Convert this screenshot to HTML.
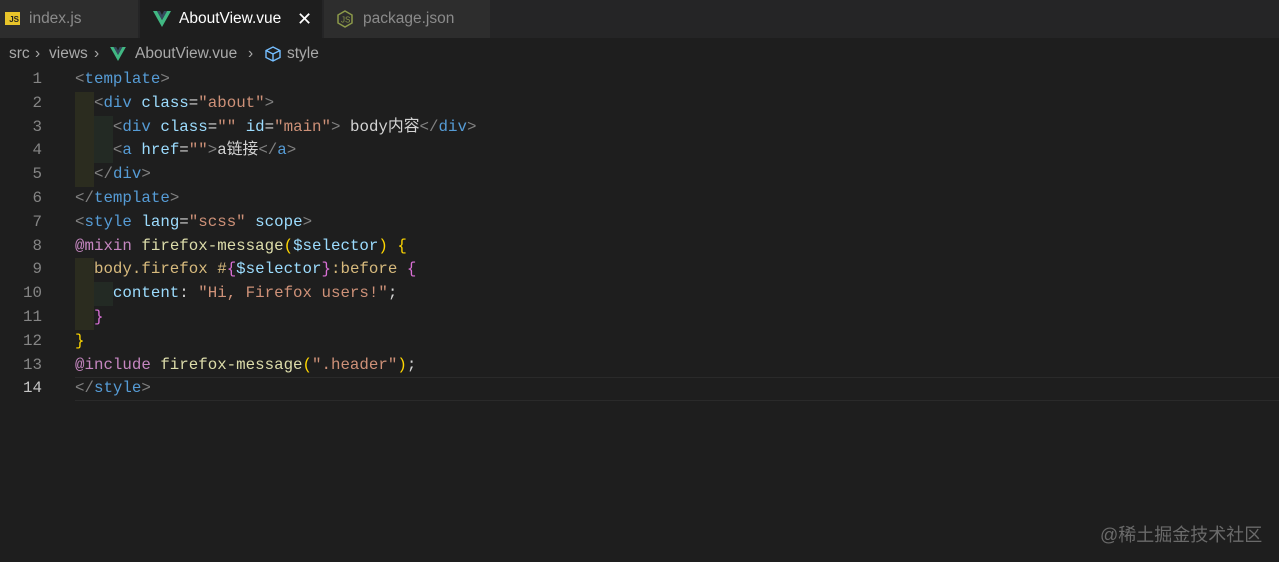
<!DOCTYPE html>
<html><head><meta charset="utf-8"><style>
*{margin:0;padding:0;box-sizing:border-box}
body{width:1279px;height:562px;background:#1e1e1e;overflow:hidden;position:relative;font-family:"Liberation Sans","Noto Sans CJK SC",sans-serif}
.tabs{position:absolute;left:0;top:0;width:1279px;height:38px;background:#252526}
.tab{position:absolute;top:0;height:38px;background:#2d2d2d;color:#8b8b8b;font-size:15.5px;line-height:38px}
.tab.active{background:#1e1e1e;color:#fff}
.bc{position:absolute;left:0;top:41px;height:26px;line-height:26px;color:#a9a9a9;font-size:15.5px;white-space:nowrap}
.code{position:absolute;left:0;top:68px;font-family:"Liberation Mono","Noto Sans CJK SC",monospace;font-size:15.8px}
.ln{position:absolute;left:0;width:42px;text-align:right;color:#858585;height:23.8px;line-height:23.8px}
.l{position:absolute;left:75px;height:23.8px;line-height:23.8px;white-space:pre;color:#d4d4d4}
.g{position:absolute;width:19px;height:23.8px}
.b{color:#808080}.t{color:#569cd6}.a{color:#9cdcfe}.s{color:#ce9178}.k{color:#c586c0}.f{color:#dcdcaa}.y{color:#ffd700}.p{color:#da70d6}.c{color:#d7ba7d}
</style></head><body>
<div class="tabs">
 <div class="tab" style="left:0;width:138px"><span style="position:absolute;left:5px;top:12px;width:15px;height:13px;background:#e8c42a;color:#222;font-size:8px;line-height:15px;text-align:right;padding-right:1px;font-weight:bold">JS</span><span style="position:absolute;left:29px">index.js</span></div>
 <div class="tab active" style="left:140px;width:182px"><svg style="position:absolute;left:13px;top:11px" width="18" height="16" viewBox="0 0 18 16"><path d="M0 0h4l5 9 5-9h4L9 16z" fill="#41b883"/><path d="M4 0h3l2 4 2-4h3L9 9z" fill="#35495e"/></svg><span style="position:absolute;left:39px">AboutView.vue</span><span style="position:absolute;left:157px;font-size:18px">✕</span></div>
 <div class="tab" style="left:324px;width:166px"><svg style="position:absolute;left:12px;top:10px" width="18" height="18" viewBox="0 0 18 18"><path d="M9 1l7 4v8l-7 4-7-4V5z" fill="none" stroke="#8c9a4a" stroke-width="1.5"/><text x="5" y="12.5" font-size="8" fill="#8c9a4a" font-family="Liberation Sans">JS</text></svg><span style="position:absolute;left:39px">package.json</span></div>
</div>
<div class="bc"><span style="position:absolute;left:9px">src</span><span style="position:absolute;left:35px">›</span><span style="position:absolute;left:49px">views</span><span style="position:absolute;left:94px">›</span><svg style="position:absolute;left:110px;top:6px" width="16" height="14" viewBox="0 0 18 16"><path d="M0 0h4l5 9 5-9h4L9 16z" fill="#41b883"/><path d="M4 0h3l2 4 2-4h3L9 9z" fill="#35495e"/></svg><span style="position:absolute;left:135px">AboutView.vue</span><span style="position:absolute;left:248px">›</span><svg style="position:absolute;left:264px;top:5px" width="18" height="16" viewBox="0 0 18 16"><path d="M9 1l7 3.5v7L9 15l-7-3.5v-7z M2 4.5l7 3.5 7-3.5 M9 8v7" fill="none" stroke="#75beff" stroke-width="1.4"/></svg><span style="position:absolute;left:287px">style</span></div>
<div class="code">
<div class="g" style="left:75px;top:23.8px;height:95.2px;background:#2b2c1f"></div>
<div class="g" style="left:94px;top:47.6px;height:47.6px;background:#232a24"></div>
<div class="g" style="left:75px;top:190.4px;height:71.4px;background:#2b2c1f"></div>
<div class="g" style="left:94px;top:214.2px;height:23.8px;background:#232a24"></div>
<div style="position:absolute;left:75px;top:309.4px;width:1204px;height:23.8px;border-top:1px solid #2a2a2a;border-bottom:1px solid #2a2a2a"></div>
<div class="ln" style="top:0">1</div><div class="ln" style="top:23.8px">2</div><div class="ln" style="top:47.6px">3</div><div class="ln" style="top:71.4px">4</div><div class="ln" style="top:95.2px">5</div><div class="ln" style="top:119px">6</div><div class="ln" style="top:142.8px">7</div><div class="ln" style="top:166.6px">8</div><div class="ln" style="top:190.4px">9</div><div class="ln" style="top:214.2px">10</div><div class="ln" style="top:238px">11</div><div class="ln" style="top:261.8px">12</div><div class="ln" style="top:285.6px">13</div><div class="ln" style="top:309.4px;color:#c6c6c6">14</div>
<div class="l" style="top:0"><span class="b">&lt;</span><span class="t">template</span><span class="b">&gt;</span></div>
<div class="l" style="top:23.8px">  <span class="b">&lt;</span><span class="t">div</span> <span class="a">class</span>=<span class="s">"about"</span><span class="b">&gt;</span></div>
<div class="l" style="top:47.6px">    <span class="b">&lt;</span><span class="t">div</span> <span class="a">class</span>=<span class="s">""</span> <span class="a">id</span>=<span class="s">"main"</span><span class="b">&gt;</span> body内容<span class="b">&lt;/</span><span class="t">div</span><span class="b">&gt;</span></div>
<div class="l" style="top:71.4px">    <span class="b">&lt;</span><span class="t">a</span> <span class="a">href</span>=<span class="s">""</span><span class="b">&gt;</span>a链接<span class="b">&lt;/</span><span class="t">a</span><span class="b">&gt;</span></div>
<div class="l" style="top:95.2px">  <span class="b">&lt;/</span><span class="t">div</span><span class="b">&gt;</span></div>
<div class="l" style="top:119px"><span class="b">&lt;/</span><span class="t">template</span><span class="b">&gt;</span></div>
<div class="l" style="top:142.8px"><span class="b">&lt;</span><span class="t">style</span> <span class="a">lang</span>=<span class="s">"scss"</span> <span class="a">scope</span><span class="b">&gt;</span></div>
<div class="l" style="top:166.6px"><span class="k">@mixin</span> <span class="f">firefox-message</span><span class="y">(</span><span class="a">$selector</span><span class="y">)</span> <span class="y">{</span></div>
<div class="l" style="top:190.4px">  <span class="c">body.firefox #</span><span class="p">{</span><span class="a">$selector</span><span class="p">}</span><span class="c">:before</span> <span class="p">{</span></div>
<div class="l" style="top:214.2px">    <span class="a">content</span>: <span class="s">"Hi, Firefox users!"</span>;</div>
<div class="l" style="top:238px">  <span class="p">}</span></div>
<div class="l" style="top:261.8px"><span class="y">}</span></div>
<div class="l" style="top:285.6px"><span class="k">@include</span> <span class="f">firefox-message</span><span class="y">(</span><span class="s">".header"</span><span class="y">)</span>;</div>
<div class="l" style="top:309.4px"><span class="b">&lt;/</span><span class="t">style</span><span class="b">&gt;</span></div>
</div>
<div style="position:absolute;left:1100px;top:521px;color:#6a6a6a;font-size:18px;white-space:nowrap">@稀土掘金技术社区</div>
</body></html>
